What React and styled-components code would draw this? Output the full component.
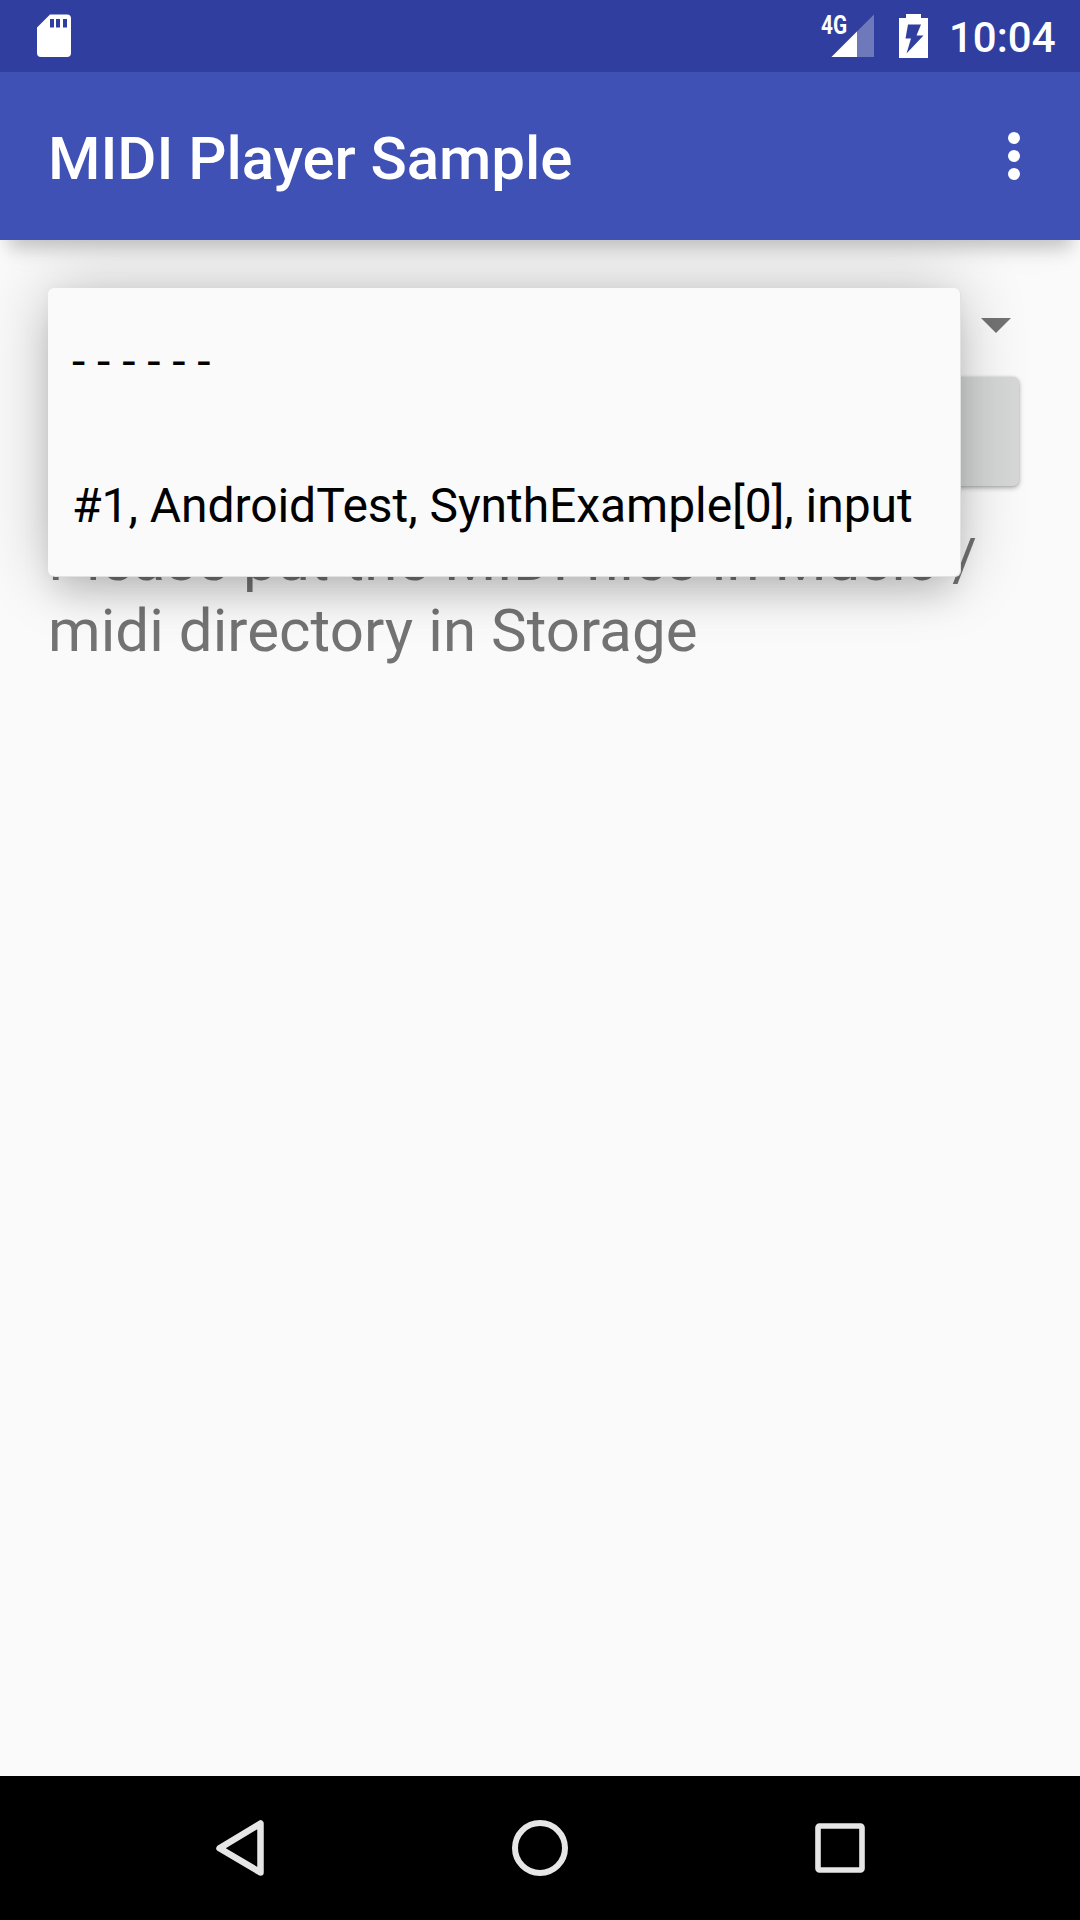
import React from "react";
import styled, { createGlobalStyle } from "styled-components";

const GlobalStyle = createGlobalStyle`
  *, *::before, *::after { box-sizing: border-box; }
  html, body { margin: 0; padding: 0; background: #fafafa; }
`;

const Screen = styled.div`
  width: 1080px;
  height: 1920px;
  display: flex;
  flex-direction: column;
  overflow: hidden;
  background: #fafafa;
  font-family: Roboto, "Liberation Sans", sans-serif;
`;

const StatusBar = styled.header`
  position: relative;
  z-index: 2;
  flex: none;
  height: 72px;
  display: flex;
  justify-content: space-between;
  background: #303f9f;
  padding: 0 24.500px 0 37px;
  color: #fff;
`;

const StatusGroup = styled.div`
  display: flex;
  align-items: flex-start;
  padding-top: 14px;
`;

const Network = styled.div`
  position: relative;
  width: 54px;
  height: 44px;
  margin-right: 25px;
`;

const NetworkType = styled.span`
  position: absolute;
  left: 1px;
  top: -4px;
  font-size: 26px;
  line-height: 30px;
  font-weight: 700;
  transform: scaleX(0.8);
  transform-origin: 0 50%;
`;

const Icon = styled.svg`
  display: block;
  flex: none;
  overflow: visible;
`;

const Clock = styled.time`
  margin-left: 21px;
  font-size: 42px;
  line-height: 48px;
  font-weight: 500;
`;

const AppBar = styled.div`
  position: relative;
  z-index: 1;
  flex: none;
  height: 168px;
  display: flex;
  align-items: center;
  justify-content: space-between;
  padding: 4px 60px 0 48px;
  background: #3f51b5;
  box-shadow: 0 16px 16px -8px rgba(0, 0, 0, 0.18), 0 26px 28px -14px rgba(0, 0, 0, 0.06);
`;

const Title = styled.h1`
  margin: 2px 0 0;
  color: #fff;
  font-size: 60px;
  line-height: 70px;
  font-weight: 500;
  letter-spacing: -0.06px;
`;

const OverflowButton = styled.button`
  display: flex;
  flex-direction: column;
  gap: 6px;
  margin: 0 0 4px;
  padding: 0;
  border: 0;
  background: none;
`;

const Dot = styled.span`
  width: 12px;
  height: 12px;
  border-radius: 50%;
  background: #fff;
`;

const Content = styled.main`
  position: relative;
  flex: 1;
  padding: 48px;
`;

const Spinner = styled.div`
  height: 78px;
  display: flex;
  justify-content: flex-end;
  align-items: flex-start;
  padding: 30px 21px 0 0;
`;

const PlayButton = styled.button`
  display: block;
  width: 960px;
  height: 109px;
  margin: 11px 0 0 11px;
  border: 0;
  border-radius: 6px;
  background: #d6d7d7;
  box-shadow: 0 2px 5px rgba(0, 0, 0, 0.3), 0 0 3px rgba(0, 0, 0, 0.12);
`;

const Message = styled.p`
  margin: 38px 0 0;
  color: #737373;
  font-size: 60px;
  line-height: 71px;
  letter-spacing: 0.06px;
`;

const Line = styled.span`
  display: block;
  white-space: nowrap;
`;

const Menu = styled.ul`
  position: absolute;
  left: 48px;
  top: 48px;
  width: 912px;
  margin: 0;
  padding: 0;
  list-style: none;
  border-radius: 6px;
  background: #fafafa;
  box-shadow:
    1px 1px 0 #e2e2e2,
    0 26px 32px -8px rgba(0, 0, 0, 0.13),
    0 0 12px rgba(0, 0, 0, 0.03),
    0 0 66px rgba(0, 0, 0, 0.24);
`;

const MenuItem = styled.li`
  height: 144px;
  display: flex;
  align-items: center;
  padding: 4px 24px 0;
  color: #000;
  font-size: 48px;
  line-height: 56px;
  letter-spacing: -0.05px;
  white-space: nowrap;
`;

const NavBar = styled.nav`
  flex: none;
  height: 144px;
  display: flex;
  justify-content: center;
  background: #000;
`;

const NavButton = styled.button`
  width: 300px;
  height: 144px;
  display: flex;
  align-items: center;
  justify-content: center;
  padding: 0;
  border: 0;
  background: none;
`;

const devices = ["- - - - - -", "#1, AndroidTest, SynthExample[0], input"];

const SdCardIcon = () => (
  <Icon width="34" height="43" viewBox="0 0 34 43">
    <path
      fill="#fff"
      fillRule="evenodd"
      d="M13 .5H30a4 4 0 0 1 4 4V39a4 4 0 0 1-4 4H4a4 4 0 0 1-4-4V13.5ZM13 5v8.500h4V5ZM19 5v8.500h4V5ZM26 5v8.500h4V5Z"
    />
  </Icon>
);

const SignalIcon = () => (
  <Icon width="54" height="44" viewBox="0 0 54 44">
    <path fill="#fff" fillOpacity=".3" d="M54 .5V43H11.500Z" />
    <path fill="#fff" d="M37 17.500V43H11.500Z" />
  </Icon>
);

const BatteryIcon = () => (
  <Icon width="29" height="44" viewBox="0 0 29 44">
    <path
      fill="#fff"
      fillRule="evenodd"
      d="M7 0H22V4H29V44H0V4H7ZM9 10.500 6.500 24.500H12L7.500 39.500 24.500 21.500H17.500L22 10.500Z"
    />
  </Icon>
);

const BackIcon = () => (
  <Icon width="48" height="56" viewBox="0 0 48 56">
    <path d="M44.500 3.500V52.500L3.500 28.300Z" fill="none" stroke="#e6e6e6" strokeWidth="6.500" strokeLinejoin="round" />
  </Icon>
);

const HomeIcon = () => (
  <Icon width="56" height="56" viewBox="0 0 56 56">
    <circle cx="28" cy="28" r="25" fill="none" stroke="#e6e6e6" strokeWidth="6" />
  </Icon>
);

const RecentsIcon = () => (
  <Icon width="50" height="50" viewBox="0 0 50 50">
    <rect x="3" y="3" width="44" height="44" rx="1.500" fill="none" stroke="#e6e6e6" strokeWidth="5.600" strokeLinejoin="round" />
  </Icon>
);

export default function App() {
  return (
    <Screen>
      <GlobalStyle />
      <StatusBar>
        <StatusGroup>
          <SdCardIcon />
        </StatusGroup>
        <StatusGroup>
          <Network>
            <SignalIcon />
            <NetworkType>4G</NetworkType>
          </Network>
          <BatteryIcon />
          <Clock>10:04</Clock>
        </StatusGroup>
      </StatusBar>
      <AppBar>
        <Title>MIDI Player Sample</Title>
        <OverflowButton aria-label="More options">
          <Dot />
          <Dot />
          <Dot />
        </OverflowButton>
      </AppBar>
      <Content>
        <Spinner>
          <Icon width="30" height="15" viewBox="0 0 30 15">
            <path fill="#737373" d="M0 0H30L15 15Z" />
          </Icon>
        </Spinner>
        <PlayButton aria-label="Play" />
        <Message>
          <Line>Please put the MIDI files in Music /</Line>
          <Line>midi directory in Storage</Line>
        </Message>
        <Menu role="listbox">
          {devices.map((name) => (
            <MenuItem key={name} role="option">
              {name}
            </MenuItem>
          ))}
        </Menu>
      </Content>
      <NavBar>
        <NavButton aria-label="Back">
          <BackIcon />
        </NavButton>
        <NavButton aria-label="Home">
          <HomeIcon />
        </NavButton>
        <NavButton aria-label="Recents">
          <RecentsIcon />
        </NavButton>
      </NavBar>
    </Screen>
  );
}
